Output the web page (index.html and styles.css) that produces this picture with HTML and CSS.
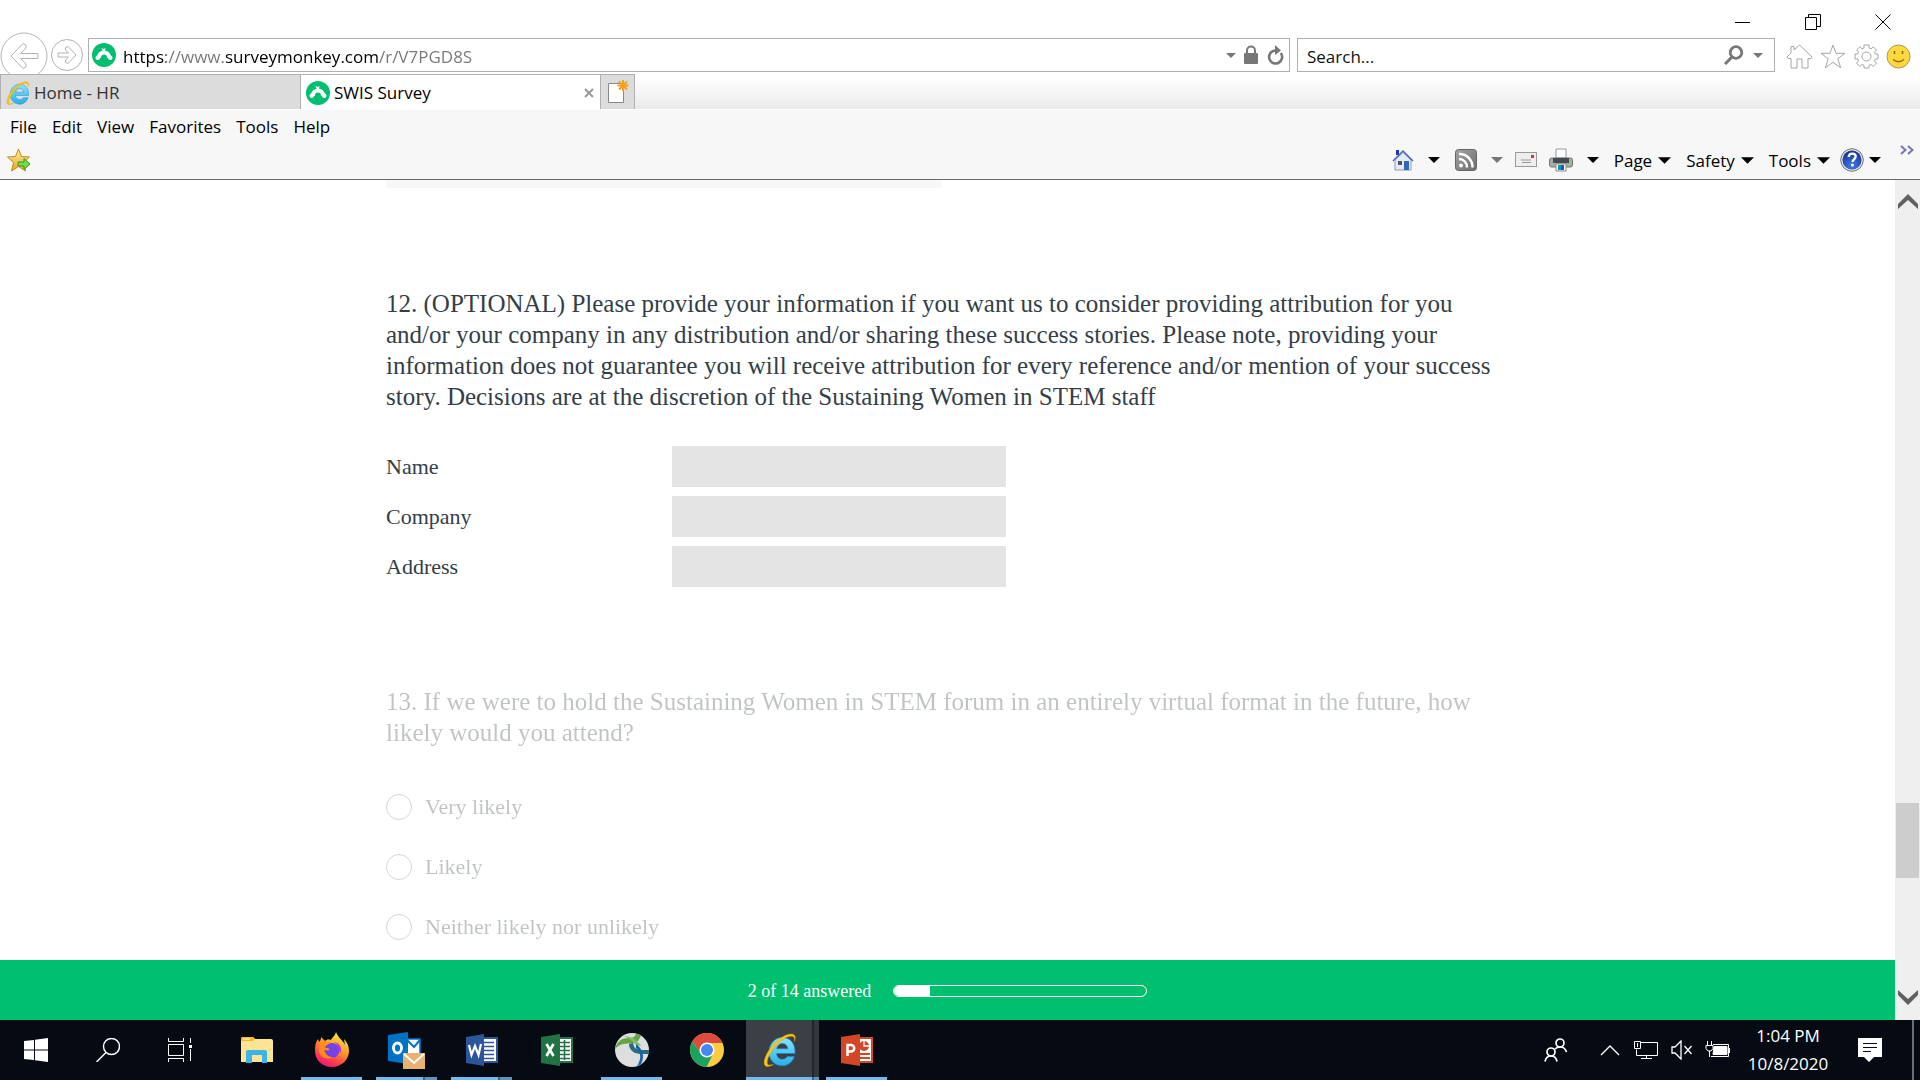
FILE: index.html
```html
<!DOCTYPE html>
<html lang="en">
<head>
    <meta charset="UTF-8">
    <meta name="viewport" content="width=device-width, initial-scale=1.0">
    <title>SWIS Survey</title>
    <link rel="stylesheet" href="styles.css">
</head>
<body>
    <!-- shared icons -->
    <svg class="sprite" aria-hidden="true">
        <defs>
            <linearGradient id="ieBlue" x1="0" y1="0" x2="0" y2="1">
                <stop offset="0" stop-color="#8fe3fb"/>
                <stop offset="1" stop-color="#27aee8"/>
            </linearGradient>
            <linearGradient id="gold" x1="0" y1="0" x2="0" y2="1">
                <stop offset="0" stop-color="#fff0a0"/>
                <stop offset="1" stop-color="#e9a520"/>
            </linearGradient>
            <linearGradient id="fox" x1="0.8" y1="0" x2="0.3" y2="1">
                <stop offset="0" stop-color="#fff44f"/>
                <stop offset="0.45" stop-color="#ff9a1f"/>
                <stop offset="0.8" stop-color="#ff3750"/>
                <stop offset="1" stop-color="#e31587"/>
            </linearGradient>
            <radialGradient id="helpBlue" cx="0.5" cy="0.8" r="0.8">
                <stop offset="0" stop-color="#3f7be8"/>
                <stop offset="1" stop-color="#16308f"/>
            </radialGradient>
            <linearGradient id="grey" x1="0" y1="0" x2="1" y2="1">
                <stop offset="0" stop-color="#a5a5a5"/>
                <stop offset="1" stop-color="#6c6c6c"/>
            </linearGradient>
        </defs>
        <symbol id="caret" viewBox="0 0 12 6"><path d="M0 0h12L6 6z" fill="currentColor"/></symbol>
        <symbol id="monkey" viewBox="0 0 24 24">
            <circle cx="12" cy="12" r="12" fill="#00bf6f"/>
            <path d="M6.800 15C7.200 7.500 16.800 7.500 17.200 15" fill="none" stroke="#fff" stroke-width="4"/>
            <circle cx="5.800" cy="14.800" r="2.300" fill="#fff"/>
            <circle cx="18.200" cy="14.800" r="2.300" fill="#fff"/>
            <path d="M9.500 5l2.200 1L13.500 5 13 8.500h-2z" fill="#fff"/>
        </symbol>
        <symbol id="ie" viewBox="0 0 34 34">
            <path d="M32 20.500H13.500c.3 3.700 2.700 5.800 5.800 5.800 2.200 0 4-.9 5-2.700h7c-1.800 5.600-6.300 9.200-12.200 9.200C11.600 32.800 6 27 6 19.300 6 10.800 12 4.500 19.300 4.500 27.500 4.500 32.700 11 32 20.500zM13.700 15.800h11.100c-.4-3.200-2.500-5.200-5.400-5.200-2.900 0-5.100 2-5.700 5.200z" fill="url(#ieBlue)" stroke="#168ccb" stroke-width="0.700"/>
            <path d="M31.500 8.500c1.400-3.500 1-6.200-1.500-7.200C25.500-.3 16 4.500 9.500 12.500 2 21.500-.8 30.500 2.600 33c1.700 1.200 4.700.4 8-1.700-2.700 1-4.900 1.100-5.800.1C2.900 29 6 21 12 13.800 18.500 6 26.500 1.800 30 3.600c1.400.8 1.800 2.500 1.500 4.900z" fill="#f8c613" stroke="#d79b07" stroke-width="0.400"/>
        </symbol>
    </svg>

    <header class="browser">
        <div class="window-buttons">
            <button aria-label="Minimize"><svg width="16" height="16" viewBox="0 0 16 16"><path d="M0 8.500h15" stroke="#000"/></svg></button>
            <button aria-label="Restore"><svg width="16" height="16" viewBox="0 0 16 16" fill="none" stroke="#000"><path d="M.5 3.500h11v12H.5zM3.500 3V.5h12v12H12"/></svg></button>
            <button aria-label="Close"><svg width="16" height="16" viewBox="0 0 16 16"><path d="M.5.5l15 15M15.500.5l-15 15" stroke="#000"/></svg></button>
        </div>

        <div class="nav-row">
            <button class="back" aria-label="Back"><svg width="48" height="48" viewBox="0 0 48 48" fill="none" stroke="#b4b4b4"><circle cx="24" cy="24" r="23"/><path d="M11 24l12-12.500 3 1.500v3l-5.500 5.500H38v5H20.500L26 32v3l-3 1.500z"/></svg></button>
            <button class="forward" aria-label="Forward"><svg width="34" height="34" viewBox="0 0 34 34" fill="none" stroke="#b4b4b4"><circle cx="17" cy="17" r="15.500"/><path d="M26 17l-8 8.500-2.500-1V22l3-3H8v-4h10.500l-3-3V9.500l2.500-1z"/></svg></button>
            <div class="address-box">
                <svg width="24" height="24"><use href="#monkey"/></svg>
                <input class="address" type="text" aria-label="Address" value="https://www.surveymonkey.com/r/V7PGD8S">
                <button aria-label="Show address list"><svg width="10" height="5"><use href="#caret"/></svg></button>
                <button aria-label="Security report"><svg width="16" height="20" viewBox="0 0 16 20"><rect x="1" y="8" width="14" height="11" rx="1" fill="#777"/><path d="M4 9V5.500a4 4 0 0 1 8 0V9" fill="none" stroke="#777" stroke-width="2"/></svg></button>
                <button aria-label="Refresh"><svg width="18" height="20" viewBox="0 0 18 20"><path d="M14.800 8A6.500 6.500 0 1 1 9 5.500" fill="none" stroke="#777" stroke-width="2.600"/><path d="M9 0l6 5.500L9 10z" fill="#777"/></svg></button>
            </div>
            <div class="search-box">
                <input class="search" type="text" aria-label="Search" value="Search...">
                <button aria-label="Search"><svg width="20" height="20" viewBox="0 0 20 20" fill="none" stroke="#777"><circle cx="12" cy="7.500" r="5.800" stroke-width="2.800"/><path d="M8 12l-7 7" stroke-width="3"/></svg></button>
                <button aria-label="Search options"><svg width="10" height="5"><use href="#caret"/></svg></button>
            </div>
            <div class="nav-tools">
                <button aria-label="Home"><svg width="27" height="25" viewBox="0 0 27 25" fill="none" stroke="#a6a6a6"><path d="M1 13L5 9V2.500h3V6l5.500-5L26 13l-1 1.500h-3V24h-6v-9h-5v9H5v-9.500H2z"/></svg></button>
                <button aria-label="Favorites"><svg width="26" height="25" viewBox="0 0 26 25" fill="none" stroke="#a6a6a6"><path d="M13 1l3 8.300h9l-7.200 5.400 2.900 9.100L13 18.300l-7.700 5.500 2.900-9.100L1 9.300h9z"/></svg></button>
                <button aria-label="Settings"><svg width="25" height="25" viewBox="0 0 25 25" fill="none" stroke="#a6a6a6"><circle cx="12.500" cy="12.500" r="4.500"/><path d="M10 1h5v3l2 .8 2.300-2 3.200 3.200-2 2.300.8 1.700H24v5h-2.700l-.8 2 2 2.200-3.300 3.300-2.200-2-2 .8V24h-5v-2.700l-2-.8-2.200 2-3.300-3.300 2-2.200-.8-2H1v-5h2.700l.8-2-2-2L5.800 2.800l2.200 2 2-.8z"/></svg></button>
                <button aria-label="Send a smile"><svg width="25" height="25" viewBox="0 0 25 25"><circle cx="12.500" cy="12.500" r="11.500" fill="#ffd83b" stroke="#a89a62"/><path d="M8.500 7v3M16.500 7v3" stroke="#8a6d1c" stroke-width="1.600"/><path d="M7 15.500q5.500 4.500 11 0" fill="none" stroke="#8a6d1c" stroke-width="1.400"/></svg></button>
            </div>
        </div>

        <div class="tab-row">
            <div class="tab">
                <svg width="24" height="24"><use href="#ie"/></svg>
                <a href="#">Home - HR</a>
            </div>
            <div class="tab active">
                <svg width="24" height="24"><use href="#monkey"/></svg>
                <a href="#">SWIS Survey</a>
                <button aria-label="Close tab"><svg width="10" height="10" viewBox="0 0 10 10"><path d="M1 1l8 8M9 1L1 9" stroke="#999" stroke-width="2"/></svg></button>
            </div>
            <button class="new-tab" aria-label="New tab"><svg width="22" height="24" viewBox="0 0 22 24"><path d="M1.500 3.500h15v19h-15z" fill="#fff" stroke="#888"/><path d="M16 0v11M10.500 5.500h11M12 1.500l8 8M20 1.500l-8 8" stroke="#f5a11c" stroke-width="2"/></svg></button>
        </div>

        <div class="bars">
            <nav class="menu-bar">
                <a href="#">File</a>
                <a href="#">Edit</a>
                <a href="#">View</a>
                <a href="#">Favorites</a>
                <a href="#">Tools</a>
                <a href="#">Help</a>
            </nav>
            <div class="command-bar">
                <button class="add-favorite" aria-label="Add to Favorites bar"><svg width="24" height="24" viewBox="0 0 24 24"><path d="M11.500 1l3 7.500 8 .5-6 5.500 2 8.500-7-4.500L4.500 23l2-8.500-6-5.500 8-.5z" fill="url(#gold)" stroke="#c68a16"/><path d="M11 14h6v-3.500l6 5.500-6 5.500V18h-6z" fill="#72dc4b" stroke="#2e9a20"/></svg></button>
                <div class="commands">
                    <button aria-label="Home page"><svg width="22" height="22" viewBox="0 0 22 22"><path d="M4 1h3v5H4z" fill="#2637b4"/><path d="M3 11l8-7.500 8 7.500v10H3z" fill="#e3ebf7" stroke="#8c9cba"/><path d="M1 12L11 2l10 10" fill="none" stroke="#5267b8" stroke-width="1.500"/><path d="M12 12h5v9h-5z" fill="#2d68b4"/><path d="M6 12h4v4H6z" fill="#4e5561"/></svg></button>
                    <button class="drop" aria-label="Home page options"><svg width="12" height="6"><use href="#caret"/></svg></button>
                    <button aria-label="Feeds"><svg width="22" height="22" viewBox="0 0 22 22"><rect x=".5" y=".5" width="21" height="21" rx="3" fill="url(#grey)" stroke="#666"/><circle cx="6" cy="16.500" r="2" fill="#fff"/><path d="M4 10a8 8 0 0 1 8 8.500M4 5a13 13 0 0 1 13.500 13.500" fill="none" stroke="#fff" stroke-width="2.500"/></svg></button>
                    <button class="drop muted" aria-label="Feed options"><svg width="12" height="6"><use href="#caret"/></svg></button>
                    <button aria-label="Read mail"><svg width="22" height="22" viewBox="0 0 22 22"><rect x=".5" y="3.500" width="21" height="14" fill="#eee" stroke="#999"/><path d="M6 11h10M7 13.500h9" stroke="#999"/><path d="M16 6h3v3h-3z" fill="#d33"/></svg></button>
                    <button class="print" aria-label="Print"><svg width="24" height="24" viewBox="0 0 24 24"><path d="M7 1h10v9H7z" fill="#fff" stroke="#999"/><rect x=".5" y="10" width="23" height="9" rx="2" fill="#aaa" stroke="#777"/><path d="M4 10h16v5H4z" fill="#464b50"/><path d="M7 16h10v7H7z" fill="#fff" stroke="#888"/><path d="M9 17h3v5H9z" fill="#1e8fbb"/><path d="M12 17h3v5h-3z" fill="#1d5ca7"/><path d="M21 13h2v2h-2z" fill="#62e052"/></svg></button>
                    <button class="drop" aria-label="Print options"><svg width="12" height="6"><use href="#caret"/></svg></button>
                    <button class="word">Page <svg width="13" height="7"><use href="#caret"/></svg></button>
                    <button class="word">Safety <svg width="13" height="7"><use href="#caret"/></svg></button>
                    <button class="word">Tools <svg width="13" height="7"><use href="#caret"/></svg></button>
                    <button class="help" aria-label="Help"><svg width="24" height="24" viewBox="0 0 24 24"><circle cx="12" cy="12" r="11.300" fill="#ddd" stroke="#777"/><circle cx="12" cy="12" r="9.500" fill="url(#helpBlue)"/><path d="M8.700 9c.2-2.300 1.500-3.300 3.500-3.300 2.100 0 3.500 1.100 3.500 2.900 0 2.700-3.200 2.700-3.200 5.400" fill="none" stroke="#fff" stroke-width="2.300"/><circle cx="12.400" cy="17" r="1.500" fill="#fff"/></svg><svg width="12" height="6"><use href="#caret"/></svg></button>
                    <button class="more" aria-label="More commands"><svg width="14" height="10" viewBox="0 0 14 10" fill="none" stroke="#7376b5" stroke-width="2"><path d="M1 1l4.500 4L1 9M8 1l4.500 4L8 9"/></svg></button>
                </div>
            </div>
        </div>
    </header>

    <div class="viewport">
        <div class="page">
            <main class="survey">
                <textarea class="previous dimmed" aria-label="Previous answer"></textarea>

                <section class="question">
                    <h2>12. (OPTIONAL) Please provide your information if you want us to consider providing attribution for you and/or your company in any distribution and/or sharing these success stories. Please note, providing your information does not guarantee you will receive attribution for every reference and/or mention of your success story. Decisions are at the discretion of the Sustaining Women in STEM staff</h2>
                    <div class="fields">
                        <div class="field">
                            <label for="name">Name</label>
                            <input type="text" id="name">
                        </div>
                        <div class="field">
                            <label for="company">Company</label>
                            <input type="text" id="company">
                        </div>
                        <div class="field">
                            <label for="address">Address</label>
                            <input type="text" id="address">
                        </div>
                    </div>
                </section>

                <section class="question dimmed">
                    <h2>13. If we were to hold the Sustaining Women in STEM forum in an entirely virtual format in the future, how likely would you attend?</h2>
                    <div class="choices">
                        <label class="choice"><input type="radio" name="attend" value="very"> Very likely</label>
                        <label class="choice"><input type="radio" name="attend" value="likely"> Likely</label>
                        <label class="choice"><input type="radio" name="attend" value="neither"> Neither likely nor unlikely</label>
                    </div>
                </section>
            </main>
            <footer class="progress-bar">
                <label for="progress">2 of 14 answered</label>
                <progress id="progress" value="2" max="14"></progress>
            </footer>
        </div>
        <div class="scrollbar">
            <button aria-label="Scroll up"><svg width="20" height="16" viewBox="0 0 20 16"><path d="M0 15V10L10 0l10 10v5L10 6z" fill="#606060"/></svg></button>
            <div class="track"><div class="thumb"></div></div>
            <button aria-label="Scroll down"><svg width="20" height="16" viewBox="0 0 20 16"><path d="M0 1v5l10 10L20 6V1L10 10z" fill="#606060"/></svg></button>
        </div>
    </div>

    <footer class="taskbar">
        <div class="system">
            <button aria-label="Start"><svg width="24" height="24" viewBox="0 0 24 24" fill="#fff"><path d="M0 3l10-1v9.500H0zM11 1.800L24 0v11.500H11zM0 12.500h10V22L0 21zM11 12.500h13V24l-13-1.800z"/></svg></button>
            <button aria-label="Search"><svg width="24" height="24" viewBox="0 0 24 24" fill="none" stroke="#fff" stroke-width="1.400"><circle cx="15.500" cy="8.500" r="8"/><path d="M10 14.500L.5 24"/></svg></button>
            <button aria-label="Task View"><svg width="24" height="24" viewBox="0 0 24 24" fill="none" stroke="#fff"><path d="M.5 0v3.500h15V0M.5 6.500h15v11H.5zM.5 24v-3.500h15V24M22.500 0v5M22.500 11v12"/><path d="M21 7h3v3h-3z" fill="#fff" stroke="none"/></svg></button>
        </div>
        <div class="apps">
            <button class="app" aria-label="File Explorer"><svg width="34" height="34" viewBox="0 0 34 34"><path d="M1 6q0-2 2-2h10l2 2h16q2 0 2 2v21H1z" fill="#ffe593"/><path d="M1 6q0-2 2-2h10l2 2-2 2H1z" fill="#f6bd20"/><path d="M3 6h7" stroke="#fff"/><path d="M6 30V19q0-2 2-2h17q2 0 2 2v11h-5v-8H12v8z" fill="#3bb4e8"/></svg></button>
            <button class="app running" aria-label="Firefox"><svg width="36" height="36" viewBox="0 0 36 36"><path d="M22 0c-1 4-4 5.500-5 8-3-1-5 0-6 1L7 5c0 3-1 4-2 5L4 7C1 11 1 16 1 19c0 10 8 16 17 16s17-7 17-16c0-5-2-9-5-12l1 6c-2-5-7-7-9-13z" fill="url(#fox)"/><circle cx="18" cy="18.500" r="7.500" fill="#7542e5"/><path d="M18 11c-3-1-7 0-8 1-1 2 0 4 4 4l2 2c-3 1-5 0-6 0 1 4 5 8 10 7-9 4-16-1-15-9 0-5 4-7 7-6 3 0 5 0 6 1z" fill="#ff8b21"/><path d="M20 10c6 1 8 6 7 11l-3-4c1-3-1-5-4-7z" fill="#b833e1"/></svg></button>
            <button class="app running stacked" aria-label="Outlook"><svg width="38" height="38" viewBox="0 0 38 38"><path d="M19 8h13v15H19z" fill="#fff" stroke="#0072c6" stroke-width="1.500"/><path d="M19 9l7 7 6-7" fill="none" stroke="#0072c6" stroke-width="2"/><path d="M0 4l20-3v32L0 30z" fill="#0072c6"/><ellipse cx="9.500" cy="17" rx="4" ry="5" fill="none" stroke="#fff" stroke-width="2.800"/><path d="M15 22h22v16H15z" fill="#e8b272"/><path d="M16 23l10 9 10-9" fill="none" stroke="#fff" stroke-width="2"/></svg></button>
            <button class="app running stacked" aria-label="Word"><svg width="34" height="34" viewBox="0 0 34 34"><path d="M17 5h15v24H17z" fill="#fff" stroke="#2b579a" stroke-width="2"/><path d="M17 9.500h12M17 13.500h12M17 17.500h12M17 21.500h12M17 25.500h12" stroke="#2b579a" stroke-width="1.500"/><path d="M1 4l18-3v32L1 30z" fill="#2b579a"/><path d="M4 12l2.500 10L10 13l3.500 9L16 11" fill="none" stroke="#fff" stroke-width="2.200"/></svg></button>
            <button class="app" aria-label="Excel"><svg width="34" height="34" viewBox="0 0 34 34"><path d="M17 5h15v24H17z" fill="#fff" stroke="#217346" stroke-width="2"/><path d="M18 9.500h12M18 13.500h12M18 17.500h12M18 21.500h12M18 25.500h12M24.500 7v20" stroke="#217346" stroke-width="1.500"/><path d="M1 4l19-3v32L1 30z" fill="#217346"/><path d="M6.500 11l7 12M13.500 11l-7 12" stroke="#fff" stroke-width="2.600"/></svg></button>
            <button class="app running" aria-label="AnyConnect"><svg width="36" height="36" viewBox="0 0 36 36"><circle cx="18" cy="18" r="17" fill="#dcdedf"/><path d="M1 17C3 9 8 6 15 6c4 0 6-1 7-4.500l5 2c-2 6-6 8-11 8-7 0-11 1-15 5.500z" fill="#62a642"/><path d="M10 4c7 0 13 4 17 10l-5-1C19 9 15 6 10 4z" fill="#8bbc68"/><path d="M15 12c0 6 5 10 12 10h8v-4h-7c-5 0-8-1-9-7z" fill="#2b6b82"/><path d="M22 12c7 5 9 13 5 20l-4 2c4-6 5-13-1-18z" fill="#1763a8"/></svg></button>
            <button class="app" aria-label="Chrome"><svg width="36" height="36" viewBox="0 0 36 36"><circle cx="18" cy="18" r="17" fill="#fdcc3f"/><path d="M3.300 9.500A17 17 0 0 1 33.500 11H18a7 7 0 0 0-6.500 10z" fill="#dc4b3e"/><path d="M3.300 9.500A17 17 0 0 0 17.500 35L24 22q-6 6-12.500-1z" fill="#1aa260"/><circle cx="18" cy="18" r="7.500" fill="#fff"/><circle cx="18" cy="18" r="6" fill="#4587f3"/></svg></button>
            <button class="app running current" aria-label="Internet Explorer"><svg width="34" height="34"><use href="#ie"/></svg></button>
            <button class="app running" aria-label="PowerPoint"><svg width="34" height="34" viewBox="0 0 34 34"><path d="M17 5h15v24H17z" fill="#fff" stroke="#d24726" stroke-width="2"/><path d="M20 21h10M20 25h10" stroke="#d24726" stroke-width="2"/><circle cx="24" cy="13" r="5" fill="#d24726"/><path d="M24 8v5h5" fill="none" stroke="#fff" stroke-width="1.300"/><path d="M1 4l19-3v32L1 30z" fill="#d24726"/><path d="M7.500 23V12H11a3 3 0 0 1 0 6.500H7" fill="none" stroke="#fff" stroke-width="2.500"/></svg></button>
        </div>
        <div class="tray">
            <button class="people" aria-label="People"><svg width="24" height="24" viewBox="0 0 24 24" fill="none" stroke="#fff" stroke-width="1.700"><circle cx="16" cy="5" r="4"/><path d="M11 11q2-2 5-2 5 0 6.500 5"/><circle cx="7" cy="14" r="4"/><path d="M1 23.500q1-5.500 6-5.500t6 5.500"/></svg></button>
            <button aria-label="Show hidden icons"><svg width="20" height="12" viewBox="0 0 20 12"><path d="M1 11l9-9 9 9" fill="none" stroke="#fff" stroke-width="1.400"/></svg></button>
            <button aria-label="Network"><svg width="26" height="20" viewBox="0 0 26 20" fill="none" stroke="#fff"><path d="M7.500 2.500h17v13h-21v-6M13.500 15.500v3M8 18.500h11M1.500 1.500h6v7h-6zM4.500 3v4"/></svg></button>
            <button aria-label="Volume"><svg width="22" height="20" viewBox="0 0 22 20" fill="none" stroke="#fff" stroke-width="1.300"><path d="M1 7h3l6-6v18l-6-6H1zM13.500 6l7 8M20.500 6l-7 8"/></svg></button>
            <button aria-label="Battery"><svg width="26" height="20" viewBox="0 0 26 20" fill="none" stroke="#fff"><path d="M8 4.500h15.500v12H6M24.500 8v5M4.500 11v6M2.500 1v4M6.500 1v4M1 5.500h7v3l-2 2.500H3L1 8.500z"/><path d="M9 6.500h13v8H8z" fill="#fff"/></svg></button>
            <button class="clock"><span>1:04 PM</span><span>10/8/2020</span></button>
            <button class="notifications" aria-label="Notifications"><svg width="24" height="24" viewBox="0 0 24 24"><path d="M0 0h24v19h-8l-5 5-5-5H0z" fill="#fff"/><path d="M5 5.500h14M5 9.500h14M5 13.500h8" stroke="#060b13"/></svg></button>
            <button class="show-desktop" aria-label="Show desktop"></button>
        </div>
    </footer>
</body>
</html>
```
FILE: styles.css
```css
* {
    box-sizing: border-box;
}
body {
    margin: 0;
    height: 100vh;
    display: flex;
    flex-direction: column;
    overflow: hidden;
    background: #fff;
    color: #000;
    font-family: "Segoe UI", "Open Sans", sans-serif;
    font-size: 17px;
}
button, input, textarea {
    font: inherit;
    color: inherit;
    border: 0;
    padding: 0;
    margin: 0;
    background: none;
    border-radius: 0;
    outline: none;
}
button {
    display: flex;
    align-items: center;
    justify-content: center;
}
a {
    color: inherit;
    text-decoration: none;
}
svg {
    display: block;
    flex: none;
}
.sprite {
    position: absolute;
    width: 0;
    height: 0;
}

/* browser frame */
.browser {
    flex: none;
}
.window-buttons {
    display: flex;
    justify-content: flex-end;
    height: 38px;
    padding: 5px 2px 0 0;
}
.window-buttons button {
    width: 70px;
}
.nav-row {
    display: flex;
    height: 36px;
}
.back {
    width: 48px;
    height: 36px;
    align-items: flex-start;
    margin-top: -6px;
}
.forward {
    width: 34px;
    height: 34px;
    margin: 0 4px 0 2px;
}
.address-box, .search-box {
    display: flex;
    align-items: center;
    height: 34px;
    border: 1px solid #b0b0b0;
    color: #777;
}
.address-box {
    flex: 1;
    margin-right: 7px;
    padding: 0 5px 0 3px;
    gap: 7px;
}
.address, .search {
    flex: 1;
    min-width: 0;
    height: 32px;
    padding-top: 2px;
}
.address {
    color: transparent;
    caret-color: #000;
    background: linear-gradient(to right, #000 43px, #777 43px 101px, #000 101px 256px, #777 256px);
    -webkit-background-clip: text;
    background-clip: text;
}
.search-box {
    width: 478px;
    padding: 0 11px 0 9px;
    gap: 9px;
}
.search {
    color: #111;
}
.nav-tools {
    display: flex;
    align-items: center;
    width: 145px;
    height: 36px;
    padding: 0 9px 0 11px;
    justify-content: space-between;
}
.tab-row {
    display: flex;
    height: 35px;
    background: linear-gradient(to bottom, #fff 10%, #eaeaea);
}
.tab {
    display: flex;
    align-items: center;
    width: 300px;
    padding: 1px 6px 0 5px;
    gap: 4px;
    background: #dcdcdc;
    border: 1px solid #b0b0b0;
    border-bottom: 0;
    border-right: 0;
    color: #333;
}
.tab.active {
    background: #fff;
    color: #000;
}
.tab a {
    flex: 1;
}
.new-tab {
    width: 35px;
    background: #dcdcdc;
    border: 1px solid #b0b0b0;
    border-bottom: 0;
}
.bars {
    height: 71px;
    background: #f7f7f7;
    border-top: 1px solid #fff;
    border-bottom: 1px solid #6b6b6b;
}
.menu-bar {
    display: flex;
    gap: 15px;
    height: 33px;
    padding-left: 10px;
    align-items: center;
}
.command-bar {
    display: flex;
    justify-content: space-between;
    height: 34px;
}
.add-favorite {
    width: 38px;
}
.commands {
    display: flex;
    align-items: center;
    padding-right: 6px;
}
.drop {
    margin: 0 15px 0 14px;
}
.drop.muted {
    margin-right: 12px;
    color: #777;
}
.print {
    margin-left: 12px;
}
.word {
    gap: 6px;
    margin-right: 15px;
}
.help {
    gap: 5px;
    margin-left: -5px;
}
.more {
    align-self: flex-start;
    margin: 2px 0 0 19px;
}

/* survey page */
.viewport {
    flex: 1;
    min-height: 0;
    display: flex;
    font-family: "Times New Roman", "Liberation Serif", serif;
}
.page {
    flex: 1;
    display: flex;
    flex-direction: column;
    color: #333e48;
}
.survey {
    flex: 1;
    min-height: 0;
    overflow: hidden;
    width: 100%;
    max-width: 1123px;
    margin: 0 auto;
}
.dimmed {
    opacity: 0.3;
}
.previous {
    display: block;
    width: 555px;
    height: 8px;
    margin-bottom: 100px;
    background: #e4e4e4;
    resize: none;
    overflow: hidden;
}
.question {
    margin-bottom: 99px;
}
.question h2 {
    margin: 0;
    font-size: 25px;
    font-weight: normal;
    line-height: 31px;
}
.fields {
    display: flex;
    flex-direction: column;
    gap: 9px;
    margin-top: 34px;
}
.field {
    display: flex;
    align-items: center;
    font-size: 22px;
}
.field label {
    width: 286px;
}
.field input {
    width: 334px;
    height: 41px;
    padding: 0 10px;
    background: #e4e4e4;
}
.choices {
    margin-top: 29px;
}
.choice {
    display: flex;
    align-items: center;
    gap: 13px;
    height: 60px;
    font-size: 22px;
}
.choice input {
    appearance: none;
    width: 26px;
    height: 26px;
    border: 1px solid #777;
    border-radius: 50%;
}
.progress-bar {
    display: flex;
    align-items: center;
    justify-content: center;
    gap: 22px;
    height: 60px;
    padding-top: 2px;
    background: #00bf6f;
    color: #fff;
    font-size: 18px;
}
progress {
    appearance: none;
    width: 254px;
    height: 12px;
    border: 1px solid #fff;
    border-radius: 6px;
    overflow: hidden;
    background: none;
}
progress::-webkit-progress-bar {
    background: none;
}
progress::-webkit-progress-value {
    background: #fff;
}
.scrollbar {
    display: flex;
    flex-direction: column;
    width: 25px;
    padding: 1px 0 2px;
    background: #efefef;
}
.scrollbar button {
    height: 42px;
}
.track {
    flex: 1;
    padding: 0 1px;
}
/* the thumb sits near the end of a long page */
.track::before {
    content: "";
    display: block;
    height: 77%;
}
.thumb {
    height: 10%;
    background: #cdcdcd;
}

/* taskbar */
.taskbar {
    flex: none;
    display: flex;
    height: 60px;
    background: #060b13;
    color: #fff;
}
.system {
    display: flex;
    margin-right: 3px;
}
.system button {
    width: 72px;
}
.apps {
    display: flex;
    flex: 1;
}
.app {
    width: 75px;
    background-repeat: no-repeat;
    background-position: center bottom;
    background-size: 61px 3px;
}
.running {
    background-image: linear-gradient(#76b9ed, #76b9ed);
}
.stacked {
    background-image: linear-gradient(to right, #76b9ed 47px, #3e6482 47px 49px, #5f93bc 49px);
}
.current {
    width: 73px;
    margin: 0 0 0 2px;
    padding-right: 5px;
    background-image: linear-gradient(to right, #76b9ed 66px, #3e6482 66px 68px, #5f93bc 68px), linear-gradient(to right, #3b4047 66px, #22262b 66px 68px, #33373c 68px);
    background-size: 100% 3px, 100% 100%;
}
.tray {
    display: flex;
}
.tray button {
    width: 36px;
}
.tray .people {
    margin-right: 18px;
}
.tray .clock {
    flex-direction: column;
    width: 104px;
    line-height: 28px;
}
.tray .notifications {
    width: 60px;
    margin-right: 12px;
}
.tray .show-desktop {
    width: 8px;
    border-left: 2px solid #6b6f74;
}
```
